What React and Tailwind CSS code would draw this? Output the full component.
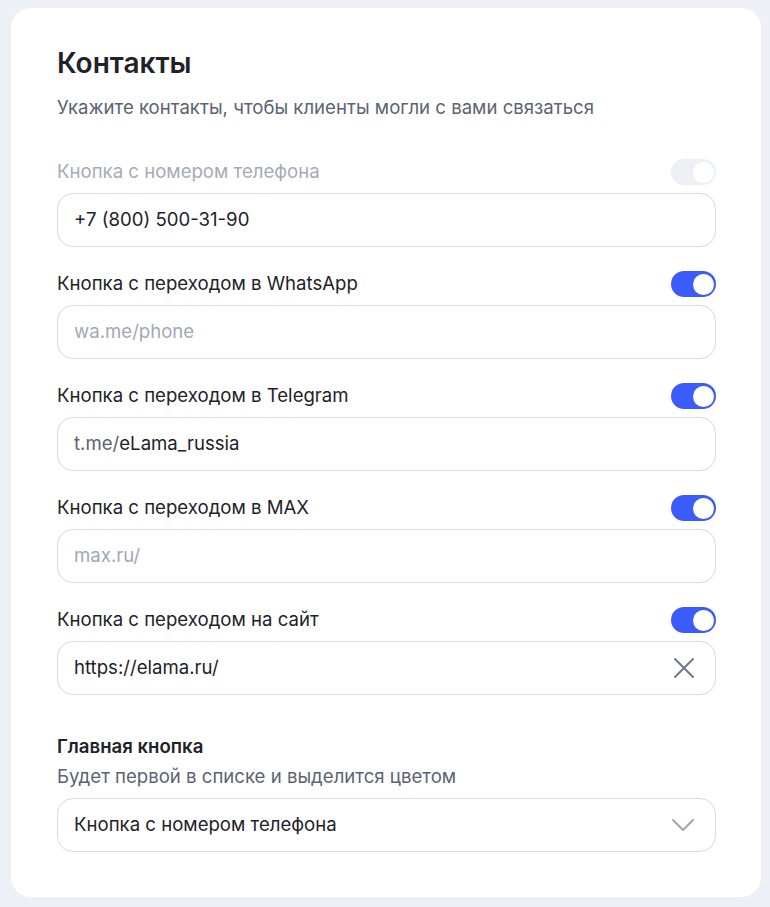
import { useState } from 'react'

const FONT = { fontFamily: 'Inter, "Noto Sans", "Liberation Sans", sans-serif' }

function Toggle({ on, disabled }) {
  return (
    <div
      className={`w-[45px] h-[26px] rounded-full p-[2.5px] flex items-center ${
        disabled ? 'bg-[#edf0f5]' : on ? 'bg-[#3b5cfc]' : 'bg-[#d5d9e2]'
      } ${on ? 'justify-end' : 'justify-start'}`}
    >
      <div className="w-[21px] h-[21px] rounded-full bg-white" />
    </div>
  )
}

function ClearIcon() {
  return (
    <svg width="22" height="22" viewBox="0 0 22 22" fill="none" className="text-[#6e7889]">
      <path d="M2 2l18 18M20 2L2 20" stroke="currentColor" strokeWidth="2" strokeLinecap="round" />
    </svg>
  )
}

function Chevron() {
  return (
    <svg width="24" height="14" viewBox="0 0 24 14" fill="none" className="text-[#a0a7b8]">
      <path d="M2 2l10 10L22 2" stroke="currentColor" strokeWidth="2" strokeLinecap="round" strokeLinejoin="round" />
    </svg>
  )
}

function Field({ label, on, disabled, value, placeholder, prefix, clearable }) {
  return (
    <div className="flex flex-col">
      <div className="flex items-center justify-between h-[26px] mb-[8px]">
        <span className={`text-[18.6px] ${disabled ? 'text-[#a4abb8]' : 'text-[#1f2229]'}`}>{label}</span>
        <Toggle on={on} disabled={disabled} />
      </div>
      <div className="h-[54px] rounded-[16px] border border-[#d8dae5] flex items-center pl-4 pr-[20px]">
        <span className="flex-1 text-[18.6px]">
          {prefix && <span className="text-[#5b6373]">{prefix}</span>}
          {value ? (
            <span className="text-[#1f2229]">{value}</span>
          ) : (
            <span className="text-[#a1a8b7]">{placeholder}</span>
          )}
        </span>
        {clearable && <ClearIcon />}
      </div>
    </div>
  )
}

export default function App() {
  const [fields] = useState([
    { label: 'Кнопка с номером телефона', on: true, disabled: true, value: '+7 (800) 500-31-90' },
    { label: 'Кнопка с переходом в WhatsApp', on: true, placeholder: 'wa.me/phone' },
    { label: 'Кнопка с переходом в Telegram', on: true, prefix: 't.me/', value: 'eLama_russia' },
    { label: 'Кнопка с переходом в MAX', on: true, placeholder: 'max.ru/' },
    { label: 'Кнопка с переходом на сайт', on: true, value: 'https://elama.ru/', clearable: true },
  ])

  return (
    <div className="min-h-screen bg-[#edf0f5] pt-2 pl-[11px] pr-[9px] pb-[10px]" style={FONT}>
      <div className="bg-white rounded-[20px] pl-[46px] pr-[45px] pt-[37px] pb-[45px]">
        <h1 className="text-[28px] leading-[36px] font-semibold text-[#1f2229]">Контакты</h1>
        <p className="mt-[14px] text-[18.6px] leading-[24px] text-[#5b6373]">
          Укажите контакты, чтобы клиенты могли с вами связаться
        </p>

        <div className="mt-[40px] flex flex-col gap-[24px]">
          {fields.map((f) => (
            <Field key={f.label} {...f} />
          ))}
        </div>

        <div className="mt-[39px]">
          <div className="text-[18.6px] leading-[24px] font-semibold text-[#1f2229]">Главная кнопка</div>
          <div className="mt-[6px] text-[18.6px] leading-[24px] text-[#5b6373]">
            Будет первой в списке и выделится цветом
          </div>
          <div className="mt-[10px] h-[54px] rounded-[16px] border border-[#d8dae5] flex items-center pl-4 pr-[20px]">
            <span className="flex-1 text-[18.6px] text-[#1f2229]">Кнопка с номером телефона</span>
            <Chevron />
          </div>
        </div>
      </div>
    </div>
  )
}
